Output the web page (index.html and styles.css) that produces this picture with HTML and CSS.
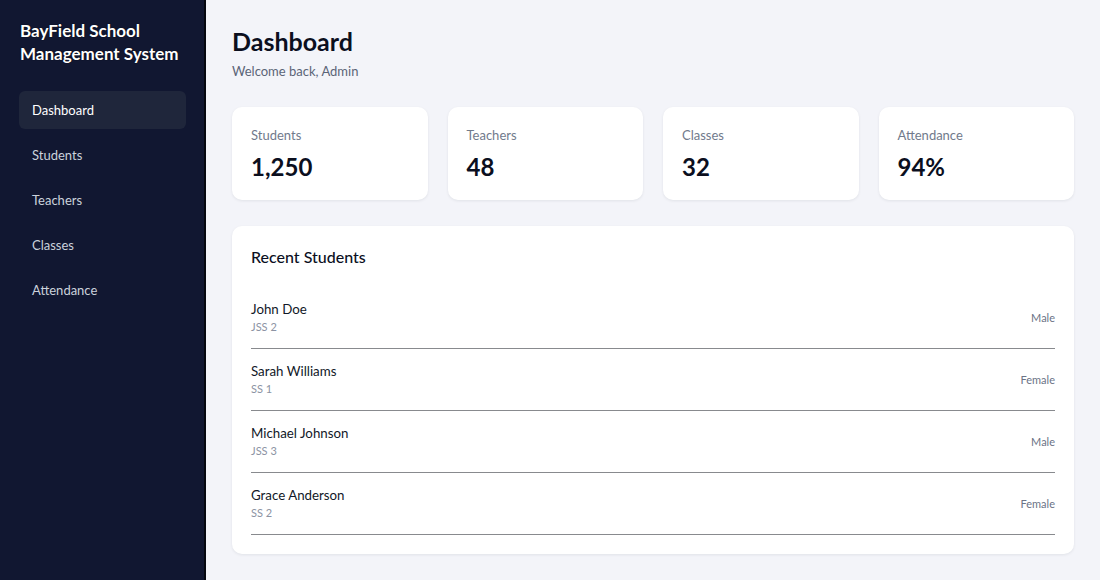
FILE: index.html
```html
<!DOCTYPE html>
<html lang="en">
<head>
<meta charset="utf-8">
<title>BayField School Management System</title>
<link rel="stylesheet" href="styles.css">
</head>
<body>
<div class="app">
  <aside class="sidebar">
    <h1 class="brand">BayField School Management System</h1>
    <nav class="nav">
      <a class="nav-item active" href="#">Dashboard</a>
      <a class="nav-item" href="#">Students</a>
      <a class="nav-item" href="#">Teachers</a>
      <a class="nav-item" href="#">Classes</a>
      <a class="nav-item" href="#">Attendance</a>
    </nav>
  </aside>
  <main class="main">
    <header class="page-head">
      <h2 class="page-title">Dashboard</h2>
      <p class="page-sub">Welcome back, Admin</p>
    </header>
    <section class="stats">
      <div class="stat-card"><div class="stat-label">Students</div><div class="stat-value">1,250</div></div>
      <div class="stat-card"><div class="stat-label">Teachers</div><div class="stat-value">48</div></div>
      <div class="stat-card"><div class="stat-label">Classes</div><div class="stat-value">32</div></div>
      <div class="stat-card"><div class="stat-label">Attendance</div><div class="stat-value">94%</div></div>
    </section>
    <section class="panel">
      <h3 class="panel-title">Recent Students</h3>
      <ul class="student-list">
        <li class="student"><div><div class="s-name">John Doe</div><div class="s-class">JSS 2</div></div><span class="s-gender">Male</span></li>
        <li class="student"><div><div class="s-name">Sarah Williams</div><div class="s-class">SS 1</div></div><span class="s-gender">Female</span></li>
        <li class="student"><div><div class="s-name">Michael Johnson</div><div class="s-class">JSS 3</div></div><span class="s-gender">Male</span></li>
        <li class="student"><div><div class="s-name">Grace Anderson</div><div class="s-class">SS 2</div></div><span class="s-gender">Female</span></li>
      </ul>
    </section>
  </main>
</div>
</body>
</html>
```
FILE: styles.css
```css
* { box-sizing: border-box; }
html, body { margin: 0; padding: 0; height: 100%; }
body {
  font-family: Lato, "Open Sans", Arial, sans-serif;
  background: #f3f4f9;
  color: #0f172a;
}
.app { display: flex; min-height: 580px; }
.sidebar {
  width: 206px;
  flex-shrink: 0;
  background: #111731;
  border-right: 2px solid #05070f;
  padding: 19px 18px 19px 19px;
}
.brand {
  margin: 0 0 26px 1px;
  color: #fff;
  font-size: 17px;
  font-weight: 700;
  line-height: 23px;
  text-shadow: 0 0 1px #000;
}
.nav { display: flex; flex-direction: column; gap: 7px; }
.nav-item {
  display: block;
  height: 38px;
  line-height: 38px;
  padding: 0 13px;
  border-radius: 6px;
  color: #cbd2dc;
  font-size: 13px;
  text-decoration: none;
}
.nav-item.active { background: #1f263b; color: #fff; }
.main { flex: 1; padding: 25px 26px 26px 26px; }
.page-title { margin: 0; font-size: 25px; font-weight: 700; line-height: 33px; color: #0b0f1e; }
.page-sub { margin: 4px 0 0; font-size: 13px; color: #5b6477; line-height: 18px; }
.stats {
  display: grid;
  grid-template-columns: repeat(4, 1fr);
  gap: 20px;
  margin-top: 27px;
}
.stat-card {
  background: #fff;
  border-radius: 10px;
  height: 93px;
  padding: 19px 19px;
  box-shadow: 0 1px 3px rgba(15, 23, 42, 0.08);
}
.stat-label { font-size: 13px; color: #717a8c; line-height: 18px; }
.stat-value { margin-top: 9px; font-size: 24px; font-weight: 700; color: #0b0f1e; line-height: 28px; }
.panel {
  margin-top: 26px;
  background: #fff;
  border-radius: 10px;
  padding: 20px 19px 19px;
  box-shadow: 0 1px 3px rgba(15, 23, 42, 0.08);
}
.panel-title { margin: 0 0 19px; font-size: 16px; font-weight: 500; color: #0b0f1e; line-height: 22px; }
.student-list { list-style: none; margin: 0; padding: 0; }
.student {
  display: flex;
  justify-content: space-between;
  align-items: center;
  height: 62px;
  border-bottom: 1px solid #888a8e;
}
.s-name { font-size: 13.3px; color: #111827; line-height: 18px; }
.s-class { font-size: 11px; color: #8c93a3; line-height: 16px; margin-top: 1px; }
.s-gender { font-size: 11px; color: #6b7386; }
```
